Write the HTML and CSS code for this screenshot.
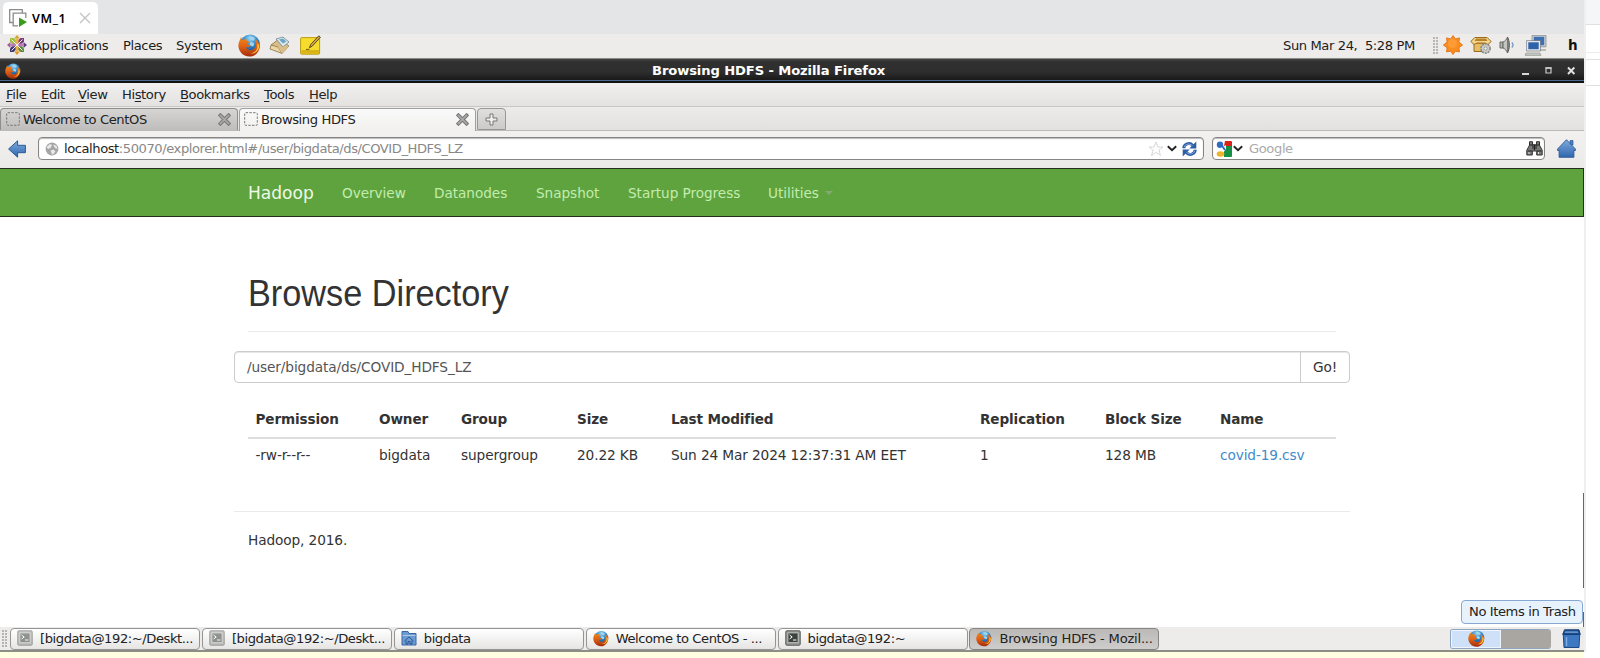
FILE: index.html
```
<!DOCTYPE html>
<html lang="en">
<head>
<meta charset="utf-8">
<title>Browsing HDFS - Mozilla Firefox</title>
<link rel="stylesheet" href="styles.css">
</head>
<body>
<svg class="defs" width="0" height="0">
  <defs>
    <linearGradient id="fx" x1="0" y1="0" x2="0" y2="1"><stop offset="0" stop-color="#f08a1c"/><stop offset=".5" stop-color="#dd5f14"/><stop offset="1" stop-color="#a32c0c"/></linearGradient>
    <radialGradient id="globe" cx=".5" cy=".2" r=".8"><stop offset="0" stop-color="#8fd4f4"/><stop offset=".5" stop-color="#2c7fc2"/><stop offset="1" stop-color="#123a78"/></radialGradient>
    <linearGradient id="blue" x1="0" y1="0" x2="0" y2="1"><stop offset="0" stop-color="#7fabdd"/><stop offset="1" stop-color="#2f66ad"/></linearGradient>
    <symbol id="firefox" viewBox="0 0 24 24">
      <circle cx="12.5" cy="11" r="10.4" fill="url(#globe)"/>
      <path d="M11 3c3-1 5 0 7 2l-2 2-3-1zM13 8l4 2-1 3-4-1z" fill="#9fd6ee"/>
      <path d="M3.2 3.2 4.6 6.2C6.4 5 8 5.3 9.2 5.8 8.6 7 9 7.6 11.6 8 11.4 9.4 9.6 10 9.3 11.2 10.6 11.6 12.4 11 13.4 12 12 14 9.6 14.3 8.2 13.6 9.6 17.4 15 18.2 17 15.2 19.200 12.8 19 9 17.500 5.6 20.500 7 21.6 9 22 10.4L22.4 7.6C24.6 15 20.2 23.6 12 23.6 4.6 23.4.2 17.4.4 11.6.6 8.4 2.2 6.400 3.2 3.200Z" fill="url(#fx)"/>
      <path d="M20 10c1.4 5.400-2 10-7 10 5 1.400 9.500-3 9-8.500z" fill="#fbc83c"/>
    </symbol>
    <symbol id="terminal" viewBox="0 0 16 16">
      <rect x=".8" y=".8" width="14.4" height="14.4" rx="1" fill="#9a9c98" stroke="#555753"/>
      <rect x="3" y="3" width="10" height="9.4" fill="#3b433f" stroke="#dcdcd8" stroke-width=".6"/>
      <path d="m4.6 5 2.6 2-2.6 2M8 10h3.4" fill="none" stroke="#fff"/>
    </symbol>
    <symbol id="placeholder" viewBox="0 0 14 14"><rect x=".7" y=".7" width="12.6" height="12.6" rx="1" fill="none" stroke="#777" stroke-width="1" stroke-dasharray="2.4 1.3"/></symbol>
    <symbol id="cross" viewBox="0 0 12 12"><path d="m2.2 2.2 7.6 7.6m0-7.6-7.6 7.6" stroke="#777" stroke-width="3.4" stroke-linecap="square"/><path d="m2.2 2.2 7.6 7.6m0-7.6-7.6 7.6" stroke="#aaa" stroke-width="1.4" stroke-linecap="square"/></symbol>
    <symbol id="chevron" viewBox="0 0 10 7"><path d="m.8 1.2 4.2 4 4.2-4" fill="none" stroke="#222" stroke-width="1.9"/></symbol>
  </defs>
</svg>

<div class="desktop">
  <div class="guest">
    <div class="vm-bar">
      <div class="vm-tab">
        <svg width="18" height="18" viewBox="0 0 18 18"><path d="M3.500 13.500H.7V.7h12.600v3M16.800 9V4.200H4.200v12.600H9" fill="none" stroke="#8c8c8c" stroke-width="1.300"/><path d="M10 8.500 18 13l-8 5z" fill="#3c9a1c"/></svg>
        <span>VM_1</span>
        <svg width="12" height="12" viewBox="0 0 12 12"><path d="m1 1 10 10m0-10L1 11" stroke="#c4c4c4" stroke-width="1.4"/></svg>
      </div>
    </div>

    <div class="panel">
      <svg class="centos" width="20" height="20" viewBox="0 0 20 20">
        <path d="m10 0 3 3.500H7z" fill="#d9a42a"/><path d="m20 10-3.500 3V7z" fill="#5b3a82"/><path d="m10 20-3-3.500h6z" fill="#e39428"/><path d="m0 10 3.500-3v6z" fill="#a55a9c"/>
        <path d="M3 3h3.500L9 5.500V9H5.500L3 6.500z" fill="#9cbf3c"/><path d="M17 3v3.500L14.500 9H11V5.500L13.500 3z" fill="#7c3a80"/><path d="M17 17h-3.500L11 14.500V11h3.500l2.500 2.500z" fill="#5d8b3d"/><path d="M3 17v-3.500L5.500 11H9v3.500L6.500 17z" fill="#3e3878"/>
        <path d="M8.500 3.500h3V8L10 9.500 8.500 8zM8.500 16.500h3V12L10 10.500 8.500 12z" fill="#e8b04a"/><path d="M3.500 8.500v3H8L9.500 10 8 8.500zM16.500 8.500v3H12L10.500 10 12 8.500z" fill="#b77fb4"/>
        <path d="m4.500 4.500 11 11m0-11-11 11" stroke="#f3eee9" stroke-width="1"/>
      </svg>
      <span class="p-apps">Applications</span><span class="p-places">Places</span><span class="p-system">System</span>
      <svg class="p-fx" width="23" height="23"><use href="#firefox"/></svg>
      <svg class="p-mail" width="22" height="20" viewBox="0 0 22 20"><path d="m2 10 8-6 10 7-7 7.4z" fill="#d9bd8a" stroke="#8c7345" stroke-width=".8"/><path d="m7 4 7-2 6 5-6 5z" fill="#dbe8ef" stroke="#71838e" stroke-width=".8"/><path d="m10 4.5 4-1 3.4 3-3.4 2z" fill="#6ca6c4"/><path d="m2 10 7 2 4 6.4L1 14z" fill="#ecd6a6" stroke="#8c7345" stroke-width=".8"/><path d="m9 12 11-1-7 7.4z" fill="#dcbf88"/></svg>
      <svg class="p-note" width="21" height="20" viewBox="0 0 21 20"><rect x=".6" y="2.6" width="19" height="16.6" rx="1" fill="#f5dc2d" stroke="#b99c12"/><path d="M1.5 15h17.4v3.6H1.5z" fill="#d8b419"/><path d="m9.4 12.8 1.4-3.4 8-8.6 1.6 1.4-8 8.8z" fill="#d7a84a" stroke="#4a3b18" stroke-width=".9"/><path d="M6 14.4h3.4" stroke="#6b5714"/></svg>
      <span class="clock">Sun Mar 24,&nbsp; 5:28 PM</span>
      <span class="grip tray-grip"></span>
      <svg class="t-star" width="20" height="20" viewBox="0 0 20 20"><path d="m10 .5 2.300 3.400 4.200-1-.6 4.200 3.700 2.900-3.700 2.700.6 4.200-4.200-.7-2.300 3.300-2.300-3.300-4.200.7.600-4.200L.4 10l3.700-2.900-.6-4.200 4.200 1z" fill="#f98d1f" stroke="#dd6a0c" stroke-width=".8"/><circle cx="9.500" cy="8.500" r="4.500" fill="#ff9b35"/></svg>
      <svg class="t-box" width="22" height="20" viewBox="0 0 22 20"><path d="M4 8h14v8.500H4z" fill="#e8bd62" stroke="#9b6b1b"/><path d="m.8 6.500 4-4h12.400l4 4L18 9.500l-3-1.500H7L4 9.500z" fill="#f4d58d" stroke="#9b6b1b"/><path d="M6 3.500h10l1.500 2.500h-13z" fill="#b9812c"/><circle cx="15.500" cy="13.500" r="4.600" fill="#c9ccc6" stroke="#888a85" stroke-width="1.600" stroke-dasharray="2 .9"/><circle cx="15.500" cy="13.500" r="1.600" fill="#f2f2f0" stroke="#888a85" stroke-width=".7"/></svg>
      <svg class="t-vol" width="16" height="18" viewBox="0 0 16 18"><path d="M1 6h3v6H1z" fill="#b5b7b3" stroke="#666864"/><path d="M4 6c2-.5 3.500-2.500 4.500-5v16C7.500 14.500 6 12.500 4 12z" fill="#c3c5c1" stroke="#666864"/><path d="M8.500 1c2.400 4 2.400 12 0 16" fill="#8b8d89" stroke="#555753"/><path d="M12.800 6.500c1.600 1.500 1.600 3.500 0 5" fill="none" stroke="#7897c4" stroke-width="1.400"/></svg>
      <svg class="t-net" width="22" height="21" viewBox="0 0 22 21"><rect x="8" y="1" width="12" height="10" fill="#3f6fb3" stroke="#c9ccd0" stroke-width="1.600"/><path d="M7 .3h14v11.500H7z" fill="none" stroke="#6c7077" stroke-width=".6"/><path d="M15 14h6v2h-6z" fill="#b9bbb8"/><rect x="2.500" y="6.500" width="12" height="8.500" fill="#2e62ab" stroke="#e4e6e8" stroke-width="1.600"/><path d="M1.500 5.500h14v10.500h-14z" fill="none" stroke="#6c7077" stroke-width=".6"/><path d="M1 18h14l1 2.400H0z" fill="#c9cbc8" stroke="#888a85" stroke-width=".6"/></svg>
      <b class="user">h</b>
    </div>

    <div class="titlebar">
      <svg class="tb-fx" width="16" height="16"><use href="#firefox"/></svg>
      <span class="tb-title">Browsing HDFS - Mozilla Firefox</span>
      <svg class="tb-btns" width="56" height="12" viewBox="0 0 56 12"><path d="M1 9h7" stroke="#d6d6d6" stroke-width="2"/><path d="M25 3h5v5h-5z" fill="none" stroke="#c8c8c8" stroke-width="1.200"/><path d="M24.400 3h6.200" stroke="#c8c8c8" stroke-width="1.800"/><path d="m47 2.500 6.400 6.500m0-6.500L47 9" stroke="#e2e2e2" stroke-width="1.900"/></svg>
    </div>

    <div class="menubar">
      <span class="m1"><u>F</u>ile</span><span class="m2"><u>E</u>dit</span><span class="m3"><u>V</u>iew</span><span class="m4">Hi<u>s</u>tory</span><span class="m5"><u>B</u>ookmarks</span><span class="m6"><u>T</u>ools</span><span><u>H</u>elp</span>
    </div>

    <div class="tabstrip">
      <div class="tab"><svg width="14" height="14"><use href="#placeholder"/></svg><span>Welcome to CentOS</span><svg width="13" height="13"><use href="#cross"/></svg></div>
      <div class="tab active"><svg width="14" height="14"><use href="#placeholder"/></svg><span>Browsing HDFS</span><svg width="13" height="13"><use href="#cross"/></svg></div>
      <div class="newtab"><svg width="13" height="13" viewBox="0 0 13 13"><path d="M5 1h3v4h4v3H8v4H5V8H1V5h4z" fill="#eee" stroke="#777"/></svg></div>
    </div>

    <div class="toolbar">
      <svg class="back" width="18" height="18" viewBox="0 0 18 18"><path d="M.6 9 9.600.8v4.500h7.800v7.400H9.600v4.500z" fill="url(#blue)" stroke="#2b5a97"/></svg>
      <div class="urlbar">
        <svg width="14" height="14" viewBox="0 0 14 14"><circle cx="7" cy="7" r="6.400" fill="#a5a5a5"/><path d="M1.500 5 5 2l2 1-1.500 3L3 7zM8 2.500l3.500 1.200L12.500 7 10 6zM5.500 8.500l3-1 2 2-2.500 3H7z" fill="#e9e9e9"/></svg>
        <span class="url"><em>localhost</em>:50070/explorer.html#/user/bigdata/ds/COVID_HDFS_LZ</span>
        <svg class="star" width="16" height="16" viewBox="0 0 16 16"><path d="m8 1 2 5h5l-4 3.200 1.500 5.300L8 11.400l-4.500 3.100L5 9.200 1 6h5z" fill="#fdfdfd" stroke="#ccc" stroke-dasharray="1.500 .5"/></svg>
        <svg class="uchev" width="10" height="7"><use href="#chevron"/></svg>
        <svg class="reload" width="15" height="16" viewBox="0 0 15 16"><path d="M1.800 7.200C1.800 3 7.500.8 10.800 4.500M13.200 8.800c0 4.200-5.700 6.400-9 2.700" fill="none" stroke="#2d5da5" stroke-width="3"/><path d="M14.300.5v7H7.300zM.7 15.500v-7h7z" fill="#2d5da5"/><path d="M2.200 6C3.200 3 7.500 2 10.500 4.700M12.800 10c-1 3-5.300 4-8.300 1.300" fill="none" stroke="#86aee0"/></svg>
      </div>
      <div class="search">
        <svg width="16" height="16" viewBox="0 0 16 16"><path d="M9 0h6a1 1 0 0 1 1 1v4H8z" fill="#d8231b"/><path d="M8 5h8v10a1 1 0 0 1-1 1H8z" fill="#159045"/><ellipse cx="4" cy="3.800" rx="3.200" ry="3.300" fill="#2f6bc4"/><path d="m5 7 5-3v4l-3 4z" fill="#fff"/><ellipse cx="4.500" cy="13" rx="3.800" ry="2.700" fill="#eeb32b"/><path d="m5.500 4 3.500 5" stroke="#2f6bc4" stroke-width="2"/></svg>
        <svg class="schev" width="10" height="7"><use href="#chevron"/></svg>
        <span>Google</span>
        <svg class="bino" width="17" height="15" viewBox="0 0 17 15"><path d="M3.500.7h3v3h4v-3h3v3.500l2.700 5V14h-5.500v-4H6.300v4H.8V9.200l2.700-5z" fill="#777a76" stroke="#333"/><path d="M3 4h4v4M14 4h-4v4M1.500 10h4.500M11 10h4.500M8.500 4v5" fill="none" stroke="#222"/><path d="M3 11v2M12.500 11v2" stroke="#ddd"/></svg>
      </div>
      <svg class="home" width="19" height="19" viewBox="0 0 19 19"><path d="M13 1.500h3V6h-3z" fill="#4a7fc0" stroke="#2b5a97" stroke-width=".7"/><path d="m9.500.7 8.900 9.300v1.500h-1.500v6.800H2.100v-6.800H.6V10z" fill="url(#blue)" stroke="#2b5a97" stroke-width=".9"/></svg>
    </div>

    <nav class="navbar">
      <a class="brand">Hadoop</a><a class="n1">Overview</a><a class="n2">Datanodes</a><a class="n3">Snapshot</a><a class="n4">Startup Progress</a><a>Utilities</a><i class="caret"></i>
    </nav>

    <main class="page">
      <h1><span>Browse Directory</span></h1>
      <div class="path"><div class="field">/user/bigdata/ds/COVID_HDFS_LZ</div><div class="go">Go!</div></div>
      <div class="files">
        <div class="row head"><span>Permission</span><span>Owner</span><span>Group</span><span>Size</span><span>Last Modified</span><span>Replication</span><span>Block Size</span><span>Name</span></div>
        <div class="row"><span>-rw-r--r--</span><span>bigdata</span><span>supergroup</span><span>20.22 KB</span><span>Sun 24 Mar 2024 12:37:31 AM EET</span><span>1</span><span>128 MB</span><span class="link">covid-19.csv</span></div>
      </div>
      <footer>Hadoop, 2016.</footer>
      <i class="edge"></i>
      <i class="edge low"></i>
      <div class="tip">No Items in Trash</div>
    </main>

    <div class="taskbar">
      <span class="grip"></span>
      <div class="task"><svg class="dim" width="16" height="16"><use href="#terminal"/></svg><span>[bigdata@192:~/Deskt...</span></div>
      <div class="task"><svg class="dim" width="16" height="16"><use href="#terminal"/></svg><span>[bigdata@192:~/Deskt...</span></div>
      <div class="task"><svg width="16" height="16" viewBox="0 0 16 16"><path d="M1 1.500h6l1 2h7V15H1z" fill="#6c9bd2" stroke="#3a67a3"/><path d="M1.500 5.500h13" stroke="#a9c8ec"/><path d="M3.500 11 8 7l4.500 4M5 10.500V14h2v-2.500h2V14h2v-3.500" fill="none" stroke="#2a5694"/></svg><span>bigdata</span></div>
      <div class="task"><svg width="16" height="17"><use href="#firefox"/></svg><span>Welcome to CentOS - ...</span></div>
      <div class="task"><svg width="16" height="16"><use href="#terminal"/></svg><span>bigdata@192:~</span></div>
      <div class="task current"><svg width="16" height="17"><use href="#firefox"/></svg><span>Browsing HDFS - Mozil...</span></div>
      <div class="pager"><div><svg width="17" height="17"><use href="#firefox"/></svg></div><div></div></div>
      <svg class="trash" width="19" height="20" viewBox="0 0 19 20"><path d="M1.200 4h16.600l-.8 14.500H2z" fill="#3d78c3" stroke="#1d4a87"/><path d="m2.500.8h14.500l1.200 4.700H.8z" fill="#1f4e8d" stroke="#173e73"/><path d="M3.500 2.200h12L16.500 4h-14z" fill="#5f93d0"/><path d="M4.500 8v9" stroke="#83b0e2" stroke-width="1.400"/></svg>
    </div>
    <div class="hint"></div>
  </div>
  <div class="gutter"><i></i><i></i><i></i></div>
</div>
</body>
</html>
```
FILE: styles.css
```
* { box-sizing: border-box; }
body { margin: 0; background: #fff; font-family: "DejaVu Sans", sans-serif; font-size: 13.1px; letter-spacing: -0.4px; color: #222; overflow: hidden; }
svg { display: block; flex: none; }
.defs { position: absolute; }
span, a { white-space: nowrap; }
.desktop { display: flex; width: 1600px; height: 658px; }
.guest { width: 1584px; display: flex; flex-direction: column; flex: none; }

.vm-bar { height: 34px; background: #e4e5e7; padding: 2px 0 0 3px; }
.vm-tab { width: 95px; height: 32px; background: #fff; border-radius: 5px 5px 0 0; display: flex; align-items: center; padding-left: 6px; }
.vm-tab span { width: 47px; margin-left: 5px; color: #000; font-family: "Noto Sans", sans-serif; font-size: 12.5px; font-weight: 600; letter-spacing: 0.6px; }

.panel { height: 24px; background: #edeceb; display: flex; align-items: center; padding: 0 0 2px 7px; color: #1c1c1c; }
.p-apps { width: 90px; margin-left: 6px; }
.p-places { width: 53px; }
.p-system { width: 62px; }
.p-mail { margin-left: 8px; }
.p-note { margin-left: 9px; }
.clock { width: 150px; margin-left: 962px; }
.grip { width: 6px; height: 17px; background: radial-gradient(circle at 1px 1px, #b5b5b5 0.8px, transparent 1px) 0 0 / 3px 3px; flex: none; }
.tray-grip { margin-left: 0; }
.t-star { margin-left: 4px; }
.t-box { margin-left: 7px; }
.t-vol { margin-left: 7px; }
.t-net { margin-left: 10px; }
.user { margin-left: 21px; font-size: 13.5px; color: #111; }

.titlebar { height: 25px; display: flex; align-items: center; background: linear-gradient(#8a8a88 0 1px, #454545 1px, #303030 4px, #2e2e2e 14px, #191919 22px, #4a6a90 22px 23px, #111 23px); padding-left: 5px; }
.tb-title { margin-left: 631px; width: 855px; font-weight: bold; letter-spacing: -0.1px; color: #fff; margin-top: -1px; }
.tb-btns { margin-left: 14px; }

.menubar { height: 24px; background: linear-gradient(#f1f0f0, #e3e2e0); border-bottom: 1px solid #c9c7c5; display: flex; align-items: center; padding-left: 6px; padding-bottom: 1px; }
.menubar u { text-underline-offset: 2px; text-decoration-thickness: 1px; }
.m1 { width: 35px; } .m2 { width: 37px; } .m3 { width: 44px; } .m4 { width: 58px; } .m5 { width: 84px; } .m6 { width: 45px; }

.tabstrip { height: 24px; padding-top: 1px; background: linear-gradient(#ecebea, #e2e1df); border-bottom: 1px solid #bcbab8; display: flex; }
.tab { width: 238px; height: 22px; display: flex; align-items: center; padding: 0 6px 1px 5px; background: linear-gradient(#d6d5d4, #bfbdbb); border: 1px solid #8e8e8e; border-bottom: 0; border-radius: 4px 4px 0 0; }
.tab span { flex: 1; margin-left: 3px; }
.tab.active { width: 237px; height: 23px; margin-left: 1px; padding: 0 6px 2px 4px; background: linear-gradient(#fafafa, #f0efee); border-color: #a0a0a0; }
.newtab { width: 29px; height: 22px; margin-left: 1px; display: flex; align-items: center; justify-content: center; background: linear-gradient(#e0dfde, #cccac8); border: 1px solid #979797; border-radius: 4px 4px 0 0; }

.toolbar { height: 37px; background: linear-gradient(#f2f1f0, #ebeae8); display: flex; align-items: center; padding: 0 0 2px 8px; }
.urlbar, .search { height: 23px; background: #fff; border: 1px solid #858585; border-radius: 4px; box-shadow: inset 0 1px 1px #bbb; display: flex; align-items: center; }
.urlbar { width: 1166px; margin-left: 12px; padding-left: 6px; }
.url { width: 1084px; margin-left: 5px; color: #888; letter-spacing: -0.44px; }
.url em { font-style: normal; color: #222; }
.uchev { margin-left: 3px; }
.reload { margin-left: 5px; }
.search { width: 333px; margin-left: 8px; padding-left: 3px; }
.schev { margin-left: 1px; }
.search span { width: 271px; margin-left: 6px; color: #aaa; margin-right: 6px; }
.home { margin-left: 12px; }

.navbar { height: 49px; background: #5fa33e; border: 1px solid #23301d; border-width: 1px 1px 1px 0; display: flex; align-items: center; padding-left: 248px; color: #c3ecaf; font-size: 13.6px; letter-spacing: -0.03px; }
.navbar .brand { width: 94px; font-size: 17.1px; color: #edf9e8; }
.n1 { width: 92px; } .n2 { width: 102px; } .n3 { width: 92px; } .n4 { width: 140px; }
.caret { margin-left: 6px; border: 4px solid transparent; border-top-color: #86a876; border-bottom: 0; }

.page { position: relative; height: 410px; background: #fff; padding-left: 234px; font-size: 13.7px; letter-spacing: -0.12px; color: #333; }
h1 { margin: 0 0 19px 14px; width: 1088px; height: 115px; padding-top: 56px; border-bottom: 1px solid #eaeaea; font: 36.3px/42px "Liberation Sans", Arial, sans-serif; letter-spacing: 0; color: #333; }
h1 span { display: inline-block; transform: scaleX(0.944); transform-origin: 0 50%; }
.path { width: 1116px; height: 32px; display: flex; border: 1px solid #ccc; border-radius: 4px; line-height: 30px; box-shadow: inset 0 1px 1px #e6e6e6; }
.field { width: 1066px; padding-left: 12px; color: #555; border-right: 1px solid #ccc; }
.go { padding-left: 12px; }
.files { width: 1088px; margin: 18px 0 0 14px; }
.row { display: grid; grid-template-columns: 123.5px 82px 116px 94px 309px 125px 115px 1fr; height: 37px; line-height: 33px; }
.row span { padding-left: 7.5px; }
.row.head { height: 38px; line-height: 36px; font-weight: bold; font-size: 13.6px; border-bottom: 2px solid #ddd; }
.row .link { color: #428bca; }
footer { width: 1116px; margin-top: 35px; border-top: 1px solid #eaeaea; padding: 19px 0 0 14px; line-height: 18px; }
.edge { position: absolute; right: 0; top: 276px; width: 1px; height: 95px; background: #666; }
.edge.low { top: 395px; height: 15px; }
.tip { position: absolute; right: 1px; bottom: 3px; width: 122px; height: 24px; border: 1px solid #85a9d2; border-radius: 4px; background: #e8f2fc; font-size: 13.1px; letter-spacing: -0.4px; line-height: 22px; padding-left: 7px; color: #222; white-space: nowrap; }

.taskbar { height: 25px; background: #edeceb; border-bottom: 2px solid #8d8d85; display: flex; align-items: center; padding-left: 2px; }
.taskbar .grip { margin-right: 2px; }
.task { width: 190px; height: 22px; margin-right: 1.9px; border: 1px solid #949494; border-radius: 4px; background: linear-gradient(#fff, #e6e5e4); display: flex; align-items: center; padding: 0 0 1px 6px; flex: none; letter-spacing: -0.43px; }
.task span { margin-left: 7px; }
.task .dim { opacity: 0.55; }
.task.current { background: linear-gradient(#bbb9b7, #cfcdcb); border-color: #858585; letter-spacing: -0.22px; }
.pager { display: flex; width: 101px; height: 20px; margin-left: 289px; border: 1px solid #8fa6bf; border-right: 0; border-radius: 3px; overflow: hidden; flex: none; }
.pager div { width: 50px; display: flex; align-items: center; justify-content: center; background: #cfe1f8; border: 1px solid #eef5fd; }
.pager div + div { background: #a9a5a1; border: 0; }
.trash { margin-left: 11px; }
.hint { height: 6px; background: #ffffe1; }

.gutter { width: 16px; border-left: 2px solid #eeeff1; height: 652px; display: flex; flex-direction: column; }
.gutter i { height: 28px; border-bottom: 1px solid #dfe0e2; }
.gutter i:first-child { height: 25px; background: #f4f6f8; }
.gutter i:nth-child(2) { height: 35px; background: linear-gradient(transparent 27px, #ececee 27px 28px, transparent 28px); }
.gutter i:nth-child(3) { height: 26px; }
```
